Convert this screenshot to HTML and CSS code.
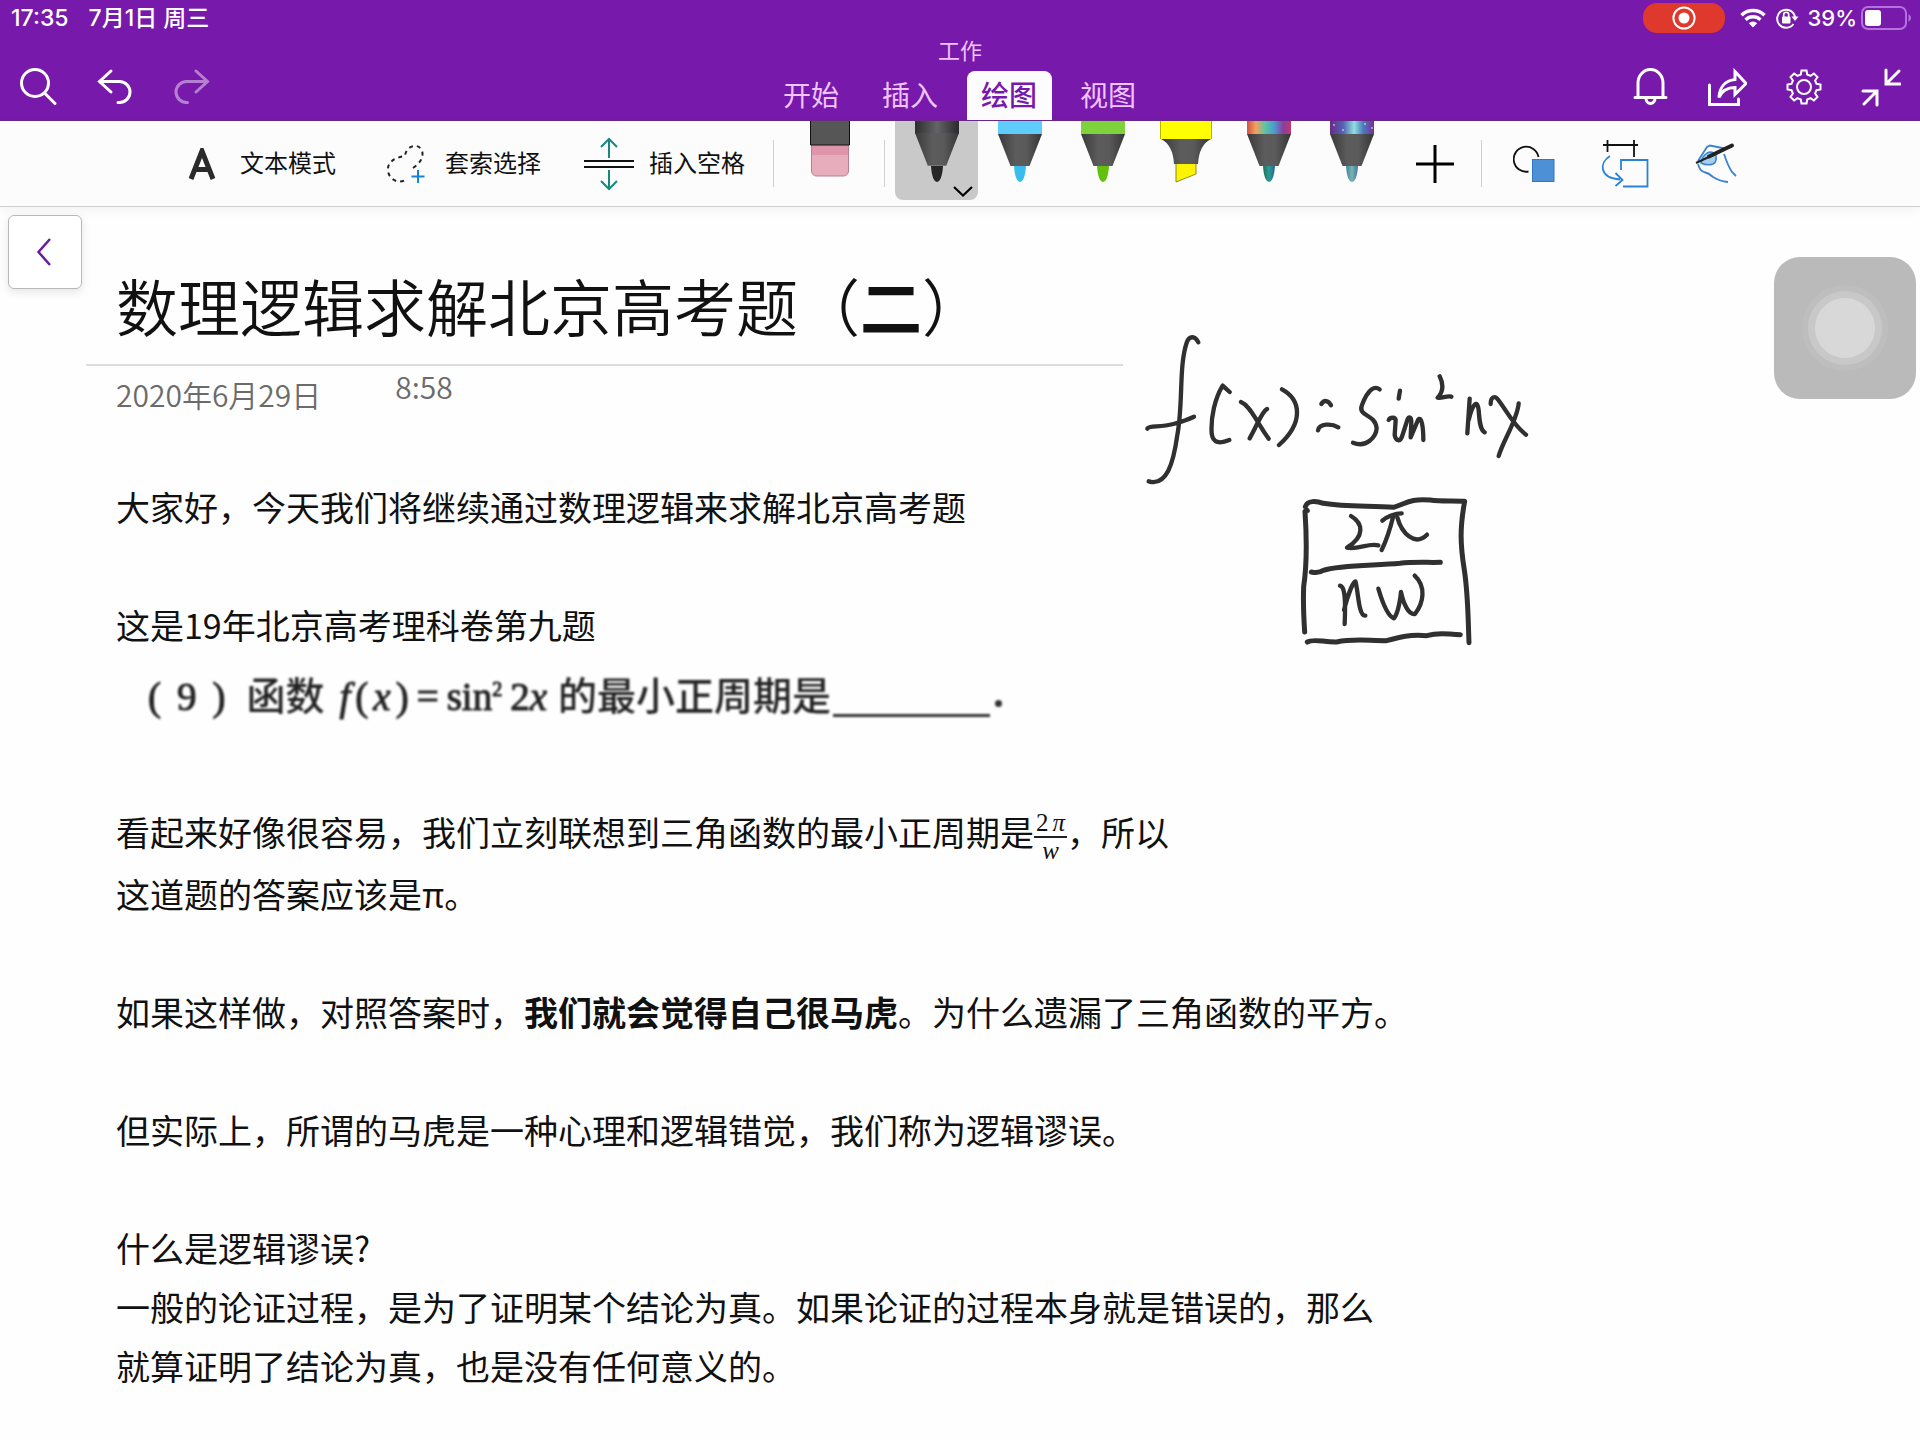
FILE: index.html
```html
<!DOCTYPE html>
<html lang="zh-CN">
<head>
<meta charset="utf-8">
<title>数理逻辑求解北京高考题（二）</title>
<link rel="stylesheet" href="styles.css">
</head>
<body>
<header class="header">
  <div class="status">
    <span class="status-left"><span>17:35</span><span>7月1日 周三</span></span>
    <span class="status-right">
      <span class="recording"><svg width="24" height="24" viewBox="0 0 24 24"><circle cx="12" cy="12" r="10.6" fill="none" stroke="#fff" stroke-width="2"/><circle cx="12" cy="12" r="5.5" fill="#fff"/></svg></span>
      <svg class="wifi" width="26" height="20" viewBox="0 0 26 20"><path d="M1.500 7.200A16.500 16.500 0 0 1 24.500 7.200" fill="none" stroke="#fff" stroke-width="3.600"/><path d="M5.500 11.700A11 11 0 0 1 20.500 11.700" fill="none" stroke="#fff" stroke-width="3.400"/><path d="M8.800 15.200a6 6 0 0 1 8.400 0L13 19.600z" fill="#fff"/></svg>
      <svg class="lock" width="23" height="22" viewBox="0 0 23 22"><path d="M17.500 17A9 9 0 1 1 19 10" fill="none" stroke="#fff" stroke-width="2"/><path d="M15.500 9.500h7L19 14z" fill="#fff"/><rect x="6" y="9.500" width="8.500" height="7" rx="1" fill="#fff"/><path d="M7.700 10V7.700a2.500 2.500 0 0 1 5 0V10" fill="none" stroke="#fff" stroke-width="1.600"/></svg>
      <span class="percent">39%</span>
      <svg width="51" height="24" viewBox="0 0 51 24"><rect x="1" y="1" width="44" height="22" rx="6" fill="none" stroke="#b472dc" stroke-width="2"/><rect x="4" y="4" width="16" height="16" rx="3" fill="#fff"/><path d="M47.500 8v8q2.500-1.500 2.500-4t-2.500-4z" fill="#b472dc"/></svg>
    </span>
  </div>
  <div class="notebook">工作</div>
  <div class="nav">
    <div class="nav-group">
      <button class="icon-button" aria-label="搜索"><svg width="40" height="40" viewBox="0 0 40 40"><circle cx="17" cy="16" r="13.500"/><path d="M26.500 26L37 36.500"/></svg></button>
      <button class="icon-button" aria-label="撤消"><svg width="40" height="40" viewBox="0 0 40 40"><path d="M16 4L4.500 14.500 16 25M5 14.500h19.500a9.700 9.700 0 0 1 0 21h-1.500"/></svg></button>
      <button class="icon-button icon-button-off" aria-label="恢复" disabled><svg width="40" height="40" viewBox="0 0 40 40"><path d="M24 4l11.500 10.500L24 25M35 14.500H14.500a9.700 9.700 0 0 0 0 21H15.500"/></svg></button>
    </div>
    <nav class="tabs">
      <button class="tab">开始</button>
      <button class="tab">插入</button>
      <button class="tab tab-active">绘图</button>
      <button class="tab">视图</button>
    </nav>
    <div class="nav-group nav-group-end">
      <button class="icon-button" aria-label="通知"><svg width="40" height="40" viewBox="0 0 40 40"><path d="M5 30.500h31M8 30V16a12.500 13.500 0 0 1 25 0v14M16 31.500a4.500 5 0 0 0 9 0"/></svg></button>
      <button class="icon-button" aria-label="共享"><svg width="40" height="40" viewBox="0 0 40 40"><path d="M2.500 18v19.500h29V32M28 4.500l11 12-11 11v-7c-8 0-13 3-16 10 .5-10 6-17 16-18z" stroke-linejoin="miter"/></svg></button>
      <button class="icon-button" aria-label="设置"><svg width="40" height="40" viewBox="0 0 40 40"><path d="M16.800 7.500L17.500 3.500h5l.7 4 3.300 1.400 3.400-2.400 3.600 3.600-2.400 3.400 1.400 3.300 4 .7v5l-4 .7-1.400 3.300 2.400 3.400-3.600 3.600-3.400-2.400-3.300 1.400-.7 4h-5l-.7-4-3.300-1.400-3.400 2.400-3.600-3.600 2.400-3.400-1.400-3.300-4-.7v-5l4-.7 1.400-3.300-2.400-3.400 3.600-3.600 3.400 2.400z" stroke-width="2"/><circle cx="20" cy="20" r="7" stroke-width="2"/></svg></button>
      <button class="icon-button" aria-label="退出全屏"><svg width="40" height="40" viewBox="0 0 40 40"><path d="M25 3v14h14M25.500 16.500L38 4M2 24h14v14M15.500 24.500L3 37"/></svg></button>
    </div>
  </div>
</header>

<div class="toolbar">
  <button class="tool tool-text"><svg width="28" height="32" viewBox="0 0 28 32"><path d="M3 31L14 3l11 28M7 21.500h14" fill="none" stroke="#2b2b2b" stroke-width="5"/></svg><span class="label">文本模式</span></button>
  <button class="tool tool-lasso"><svg width="40" height="40" viewBox="0 0 40 40" fill="none"><path d="M27 24c8-5 12-13 8-19S20 2 19 12C7 14 1 19 2 27s10 14 19 8" stroke="#222" stroke-width="2" stroke-dasharray="4 4"/><path d="M32 26v13M25.500 32.500h13" stroke="#1583d8" stroke-width="2"/></svg><span class="label">套索选择</span></button>
  <button class="tool tool-space"><svg width="50" height="54" viewBox="0 0 50 54" fill="none"><path d="M0 24h50M0 30h50" stroke="#111" stroke-width="2"/><path d="M25 21V2M17 10l8-8 8 8M25 33v19M17 44l8 8 8-8" stroke="#16897c" stroke-width="2"/></svg><span class="label">插入空格</span></button>
  <span class="divider"></span>
  <button class="tool tool-eraser" aria-label="橡皮擦"><svg width="40" height="60" viewBox="0 2 40 60"><path d="M1.500 25h37v27a5 5 0 0 1-5 5h-27a5 5 0 0 1-5-5z" fill="#e7adbd" stroke="#b67f8e"/><path d="M2 25h36v11H2z" fill="#de94ab"/><path d="M.500-1h39v27H.500z" fill="#565656" stroke="#111"/></svg></button>
  <span class="divider"></span>
  <div class="pens">
    <button class="pen pen-selected" aria-label="黑色笔"><svg width="46" height="64" viewBox="0 1 46 64"><path d="M1 0h44v14H1z" fill="url(#dark)"/><path d="M1 13h44L32.500 45h-19z" fill="url(#cone)"/><path d="M13.500 45.500h19" stroke="#777"/><path d="M17 46h12q-1 15-6 16-5-1-6-16z" fill="#262626"/></svg><svg class="more" width="20" height="11" viewBox="0 0 20 11"><path d="M1 1l9 8.500L19 1" fill="none" stroke="#000" stroke-width="2.200"/></svg></button>
    <button class="pen" aria-label="蓝色笔"><svg width="46" height="64" viewBox="0 1 46 64"><path d="M1 0h44v14H1z" fill="#5fcdfb"/><path d="M1 14h44L32.500 46h-19z" fill="url(#cone)"/><path d="M17 46h12q-1 15-6 16-5-1-6-16z" fill="#38bdec"/></svg></button>
    <button class="pen" aria-label="绿色笔"><svg width="46" height="64" viewBox="0 1 46 64"><path d="M1 0h44v14H1z" fill="#7ed33c"/><path d="M1 14h44L32.500 46h-19z" fill="url(#cone)"/><path d="M17 46h12q-1 15-6 16-5-1-6-16z" fill="#63c00d"/></svg></button>
    <button class="pen" aria-label="黄色荧光笔"><svg width="54" height="64" viewBox="0 1 54 64"><path d="M17 43h20v11L17 62z" fill="#fbf300" stroke="#8f8b1a"/><path d="M2 19h50q-12 6-13 25H15Q14 25 2 19z" fill="url(#cone)"/><path d="M1 0h52v19H1z" fill="#ff0"/><path d="M1.500 0v19M52.500 0v19" stroke="#b9b400"/></svg></button>
    <button class="pen" aria-label="彩虹笔"><svg width="46" height="64" viewBox="0 1 46 64"><path d="M1 0h44v14H1z" fill="url(#rainbow)"/><path d="M1 14h44L32.500 46h-19z" fill="url(#cone)"/><path d="M17 46h12q-1 15-6 16-5-1-6-16z" fill="url(#teal)"/></svg></button>
    <button class="pen" aria-label="星系笔"><svg width="46" height="64" viewBox="0 1 46 64"><path d="M1 0h44v14H1z" fill="url(#galaxy)"/><g fill="#fff"><circle cx="5" cy="5" r=".8"/><circle cx="14" cy="10" r=".8"/><circle cx="36" cy="4" r=".8"/><circle cx="43" cy="8" r=".8"/></g><path d="M1 14h44L32.500 46h-19z" fill="url(#cone)"/><path d="M17 46h12q-1 15-6 16-5-1-6-16z" fill="url(#mist)"/></svg></button>
    <button class="pen pen-add" aria-label="添加笔"><svg width="38" height="38" viewBox="0 0 38 38"><path d="M19 0v38M0 19h38" stroke="#000" stroke-width="3"/></svg></button>
  </div>
  <span class="divider"></span>
  <button class="tool tool-shapes" aria-label="形状"><svg width="42" height="38" viewBox="0 0 42 38"><path d="M15.500 26.500A12.500 12.500 0 1 1 25.500 12" fill="none" stroke="#111" stroke-width="1.800"/><rect x="19.500" y="14.500" width="21.500" height="22" fill="#4e90d5" stroke="#2c79c4"/></svg></button>
  <button class="tool tool-convert" aria-label="墨迹转换为形状"><svg width="48" height="48" viewBox="0 0 48 48" fill="none"><path d="M2 5h35M6.500 0v12M33 0v17" stroke="#111" stroke-width="1.800"/><path d="M9 16C-2 23-2 38 19 39.500M14.500 33l7 7-7 6M20 30V20h26.500v26.500H22" stroke="#2b82d4" stroke-width="1.800"/></svg></button>
  <button class="tool tool-hand" aria-label="使用手指绘图"><svg width="44" height="44" viewBox="0 0 44 44" fill="none"><path d="M3 19L12 5l3-1.500 15 3M29 12q4 12 8 18l4 4M3 22q2 7 6 8 5 1 9 5 6 4 15 5" stroke="#3a83cf" stroke-width="1.800"/><path d="M7 17q3-6 8-7 5 0 6 4 1 6-3 8-6 2-12-1z" fill="#a8cdf0" stroke="#3a83cf" stroke-width="1.500"/><path d="M1 21L16 14l2-1z" stroke="#222" stroke-width="2"/><path d="M14 14.500L37 3.500" stroke="#222" stroke-width="4" stroke-linecap="round"/></svg></button>
  <svg class="defs" width="0" height="0" aria-hidden="true"><defs>
    <linearGradient id="cone"><stop offset="0" stop-color="#3a3a3a"/><stop offset=".4" stop-color="#5c5c5c"/><stop offset=".65" stop-color="#5a5a5a"/><stop offset="1" stop-color="#353535"/></linearGradient>
    <linearGradient id="dark"><stop offset="0" stop-color="#2e2e30"/><stop offset=".5" stop-color="#646467"/><stop offset="1" stop-color="#2a2a2c"/></linearGradient>
    <linearGradient id="rainbow"><stop offset="0" stop-color="#d4503c"/><stop offset=".2" stop-color="#f3a060"/><stop offset=".42" stop-color="#59c5a5"/><stop offset=".62" stop-color="#4b9bd0"/><stop offset=".82" stop-color="#8a3fa0"/><stop offset="1" stop-color="#c2356f"/></linearGradient>
    <linearGradient id="galaxy"><stop offset="0" stop-color="#6b2a86"/><stop offset=".3" stop-color="#5562b5"/><stop offset=".55" stop-color="#8fe0dd"/><stop offset=".75" stop-color="#4c7cc0"/><stop offset="1" stop-color="#7c2b94"/></linearGradient>
    <linearGradient id="teal"><stop offset="0" stop-color="#1f6f5c"/><stop offset=".5" stop-color="#2c9c94"/><stop offset="1" stop-color="#27629a"/></linearGradient>
    <linearGradient id="mist"><stop offset="0" stop-color="#3f8b96"/><stop offset=".5" stop-color="#76b5b4"/><stop offset="1" stop-color="#4a6fa5"/></linearGradient>
  </defs></svg>
</div>

<main class="canvas">
  <button class="back" aria-label="返回"><svg width="16" height="30" viewBox="0 0 16 30"><path d="M14 2L2.500 15 14 28" fill="none" stroke="#6a1b9e" stroke-width="2.500"/></svg></button>
  <article class="note">
    <h1 class="title">数理逻辑求解北京高考题（<b>二</b>）</h1>
    <div class="meta"><span class="date">2020年6月29日</span><span class="time">8:58</span></div>
    <p>大家好，今天我们将继续通过数理逻辑来求解北京高考题</p>
    <p class="lead">这是19年北京高考理科卷第九题</p>
    <div class="question">
      <span class="number"><span>(</span><span>9</span><span>)</span></span><span>函数</span><span class="formula"><span class="func"><i>f</i><span>(</span><i>x</i><span>)</span></span><span>=</span><span>sin<sup>2</sup></span><span>2<i>x</i></span></span><span>的最小正周期是</span><span class="blank"></span><span class="stop"></span>
    </div>
    <p>看起来好像很容易，我们立刻联想到三角函数的最小正周期是<span class="fraction"><span class="over"><span>2</span><i>π</i></span><i>w</i></span>，所以<br>这道题的答案应该是π。</p>
    <p>如果这样做，对照答案时，<b>我们就会觉得自己很马虎</b>。为什么遗漏了三角函数的平方。</p>
    <p>但实际上，所谓的马虎是一种心理和逻辑错觉，我们称为逻辑谬误。</p>
    <p>什么是逻辑谬误?<br>一般的论证过程，是为了证明某个结论为真。如果论证的过程本身就是错误的，那么<br>就算证明了结论为真，也是没有任何意义的。</p>
  </article>
  <svg class="ink" width="440" height="340" viewBox="0 0 1320 1020" role="img" aria-label="手写墨迹">
    <path d="M235 67C226 48 208 45 200 68C176 140 190 250 172 345C160 430 140 500 86 484M82 326C86 316 120 323 160 312C185 305 205 298 222 290"/>
    <path d="M329 216L308 197C285 235 272 290 275 340C278 370 300 372 328 360M363 246C385 255 400 285 416 310C428 330 438 345 446 356M441 267C425 275 412 315 389 355M486 208C545 240 550 310 477 375"/>
    <path d="M604 252C612 239 625 240 633 256M594 331C598 310 635 310 655 322M779 208C765 197 745 205 726 255C712 290 765 280 770 325C768 350 740 385 699 368M840 212L836 236M806 300C812 290 826 292 827 300L824 345C828 365 840 365 846 350L862 300C866 288 874 290 874 305L872 352L894 300C904 285 910 320 910 360"/>
    <path d="M959 169C972 195 970 215 953 233C965 236 980 226 994 230M1049 236L1042 340M1046 300C1060 245 1072 240 1076 270C1078 300 1080 330 1094 337M1112 252C1112 230 1125 225 1135 240C1165 280 1180 315 1218 344M1196 250C1192 300 1150 360 1136 408"/>
    <path class="bold" d="M562 572L555 574C562 680 560 740 551 800C549 850 551 890 554 936M556 560C562 540 590 543 610 550C680 562 760 556 820 562C860 550 870 535 930 540C970 545 1000 541 1034 544C1020 620 1020 670 1033 750C1045 830 1044 900 1047 968M562 966C580 955 610 967 650 966C700 955 740 962 800 962C840 950 870 943 920 947C960 935 980 943 1021 944"/>
    <path d="M693 588C730 610 735 650 681 683C715 690 745 668 775 676M787 602C800 590 825 580 845 580M820 588C812 620 800 660 785 690M832 592C845 640 885 680 921 644"/>
    <path class="bold" d="M574 756C590 760 603 756 610 751C660 735 760 737 840 730C880 725 920 728 961 727"/>
    <path d="M660 797C672 800 678 820 674 912M672 870C685 820 700 785 706 784C715 810 715 890 736 887M775 806C788 850 805 890 822 895C835 880 842 830 843 816C850 850 865 885 885 882C910 850 920 800 884 767"/>
  </svg>
  <button class="assist" aria-label="辅助触控"><span class="assist-ring"><span class="assist-dot"></span></span></button>
</main>
</body>
</html>
```

FILE: styles.css
```css
* { box-sizing: border-box; }

body {
  margin: 0;
  background: #fefefe;
  color: #111;
  font-family: "Noto Sans CJK SC", sans-serif;
}

button {
  margin: 0;
  padding: 0;
  border: 0;
  background: none;
  color: inherit;
  font: inherit;
}

svg { display: block; flex: none; }
.defs { position: absolute; }

.header {
  display: flex;
  flex-direction: column;
  height: 121px;
  background: #7719aa;
  border-bottom: 1px solid #6a2a8c;
}

.status {
  display: flex;
  justify-content: space-between;
  align-items: center;
  height: 36px;
  padding: 0 8px 0 11px;
  color: #fff;
  font: 500 22px/36px Inter, "Noto Sans CJK SC", sans-serif;
}
.status-left { display: flex; gap: 20px; font-size: 23px; }
.status-right { display: flex; align-items: center; }
.recording {
  display: flex;
  align-items: center;
  justify-content: center;
  width: 82px;
  height: 30px;
  margin-right: 15px;
  border-radius: 14px;
  background: #df382c;
}
.wifi { margin-right: 10px; }
.lock { margin-right: 9px; }
.percent { margin-right: 4px; }

.notebook {
  height: 30px;
  color: #f0c4ff;
  font-size: 22px;
  line-height: 26px;
  text-align: center;
}

.nav {
  display: grid;
  grid-template-columns: 1fr auto 1fr;
  flex: 1;
  padding: 0 19px 0 18px;
}
.nav-group { display: flex; gap: 37px; padding-top: 2px; }
.nav-group-end { justify-content: flex-end; }
.icon-button { display: flex; width: 40px; height: 44px; }
.icon-button svg {
  fill: none;
  stroke: #fff;
  stroke-width: 3;
  stroke-linecap: round;
}
.icon-button-off { opacity: 0.45; }

.tabs { display: flex; gap: 14px; padding-top: 6px; height: 55px; }
.tab {
  width: 85px;
  height: 49px;
  padding-bottom: 4px;
  border-radius: 8px 8px 0 0;
  color: #f0c4ff;
  font-size: 28px;
  line-height: 44px;
}
.tab-active { background: #fcfcfc; color: #7719aa; font-weight: 500; }

.toolbar {
  display: flex;
  justify-content: center;
  align-items: center;
  height: 86px;
  padding-left: 7px;
  border-bottom: 1px solid #cfcfcf;
  background: #fcfcfc;
  box-shadow: 0 2px 12px #0000000f;
  font-size: 24px;
}
.tool { display: flex; align-items: center; white-space: nowrap; }
.label { padding-bottom: 4px; }
.tool-text { gap: 24px; margin-right: 50px; }
.tool-lasso { gap: 19px; margin-right: 43px; }
.tool-space { gap: 15px; margin-right: 28px; }
.tool-eraser { align-self: flex-start; margin: 0 34px 0 36px; }
.tool-shapes { margin: 0 46px 0 31px; }
.tool-convert { margin-right: 46px; }
.divider { width: 1px; height: 47px; background: #d0d0d0; }

.pens { display: flex; align-self: stretch; margin: 0 5px 0 10px; }
.pen {
  position: relative;
  display: flex;
  justify-content: center;
  width: 83px;
  height: 79px;
}
.pen-selected { border-radius: 0 0 8px 8px; background: #c9c9c9; }
.pen-add { align-items: center; height: 85px; }
.more { position: absolute; right: 5px; bottom: 3px; }

.canvas { position: relative; padding: 50px 0 40px 86px; }

.back {
  position: absolute;
  top: 8px;
  left: 8px;
  display: flex;
  align-items: center;
  justify-content: center;
  width: 74px;
  height: 74px;
  padding-right: 2px;
  border: 1px solid #b8b8b8;
  border-radius: 6px;
  background: #fff;
  box-shadow: 0 3px 10px #0000001a;
}

.note { padding-left: 30px; font-size: 34px; line-height: 59px; }

.title {
  width: 1037px;
  height: 109px;
  margin: 0 0 0 -30px;
  padding-left: 30px;
  border-bottom: 2px solid #dcdcdc;
  font-size: 62px;
  font-weight: 350;
  line-height: 96px;
}

.meta {
  display: flex;
  gap: 74px;
  height: 52px;
  margin-bottom: 59px;
  color: #6b6b6b;
  font-size: 30px;
  font-weight: 350;
}
.date { line-height: 56px; }
.time { line-height: 40px; }

.note p { margin: 0 0 59px; }
.note .lead { margin-bottom: 0; }

.question {
  display: flex;
  align-items: center;
  height: 86px;
  margin-bottom: 62px;
  padding-left: 32px;
  color: #222;
  font: 500 39px/86px "Liberation Serif", "Noto Sans CJK SC", serif;
  white-space: nowrap;
  filter: blur(1px);
}
.number,
.func,
.formula { display: flex; -webkit-text-stroke: 1px #222; }
.number { gap: 16px; margin-right: 21px; }
.formula { gap: 8px; margin: 0 11px 0 15px; }
.func { gap: 5px; }
.formula sup { font-size: 20px; line-height: 20px; }
.blank {
  align-self: flex-end;
  width: 157px;
  height: 3px;
  margin: 0 5px 23px 2px;
  background: #333;
}
.stop {
  align-self: flex-end;
  width: 7px;
  height: 7px;
  margin-bottom: 33px;
  border-radius: 50%;
  background: #333;
}

.fraction {
  display: inline-flex;
  flex-direction: column;
  align-items: center;
  font: 25px/26px "Liberation Serif", serif;
  vertical-align: middle;
}
.over { display: flex; gap: 4px; padding: 0 2px; border-bottom: 2px solid #222; }

.ink { position: absolute; top: 113px; left: 1120px; }
.ink path {
  fill: none;
  stroke: #303030;
  stroke-width: 13;
  stroke-linecap: round;
  stroke-linejoin: round;
}
.ink .bold { stroke-width: 15; }

.assist {
  position: absolute;
  top: 50px;
  right: 4px;
  display: flex;
  align-items: center;
  justify-content: center;
  width: 142px;
  height: 142px;
  border-radius: 26px;
  background: #bababa;
}
.assist-ring {
  display: flex;
  align-items: center;
  justify-content: center;
  width: 74px;
  height: 74px;
  border-radius: 50%;
  background: #c8c8c8;
  box-shadow: 0 0 0 6px #bebebe;
}
.assist-dot { width: 60px; height: 60px; border-radius: 50%; background: #d8d8d8; }
```
